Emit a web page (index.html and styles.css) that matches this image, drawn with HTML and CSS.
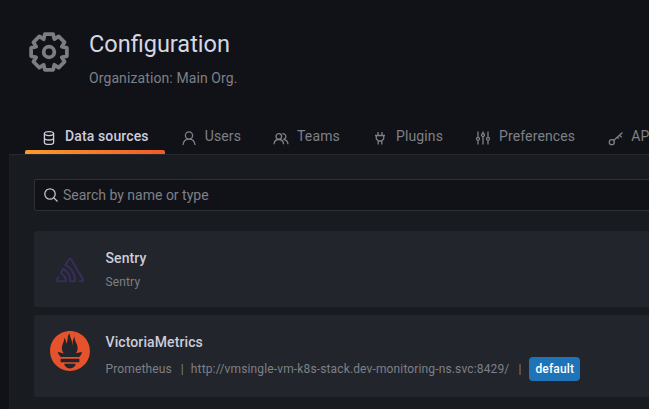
FILE: index.html
```html
<!DOCTYPE html>
<html lang="en">
<head>
<meta charset="utf-8">
<title>Configuration</title>
<link rel="stylesheet" href="styles.css">
</head>
<body>
<header class="page-header">
  <div class="title-row">
    <svg class="gear" viewBox="2 2 36 36"><polygon points="16.29,3.92 23.71,3.92 24.78,8.45 28.74,6.01 33.99,11.26 31.55,15.22 36.08,16.29 36.08,23.71 31.55,24.78 33.99,28.74 28.74,33.99 24.78,31.55 23.71,36.08 16.29,36.08 15.22,31.55 11.26,33.99 6.01,28.74 8.45,24.78 3.92,23.71 3.92,16.29 8.45,15.22 6.01,11.26 11.26,6.01 15.22,8.45"/><circle cx="20" cy="20" r="4.8"/></svg>
    <div class="title-text">
      <h1>Configuration</h1>
      <p>Organization: Main Org.</p>
    </div>
  </div>
  <nav class="tabs">
    <a class="tab active"><svg viewBox="0 0 16 16"><ellipse cx="8" cy="3.6" rx="4.6" ry="2"/><path d="M3.4 3.6v8.800c0 1.100 2 2 4.600 2s4.600-.9 4.600-2V3.600M3.400 8c0 1.100 2 2 4.600 2s4.600-.9 4.600-2"/></svg>Data sources</a>
    <a class="tab"><svg viewBox="0 0 16 16"><circle cx="8" cy="5.500" r="3.600"/><path d="M2 15c.3-3.600 2.800-5.900 6-5.900s5.700 2.300 6 5.900"/></svg>Users</a>
    <a class="tab"><svg viewBox="0 0 16 16"><circle cx="5.800" cy="6.500" r="2.800"/><path d="M1 14.300c.2-2.900 2.200-4.800 4.800-4.800s4.600 1.900 4.800 4.800M9.400 3.800a2.800 2.800 0 1 1 1 5.500c2.500.2 4.300 2.100 4.600 5"/></svg>Teams</a>
    <a class="tab"><svg viewBox="0 0 16 16"><path d="M6 2v3.500M10 2v3.500M3 5.500h10M4.300 5.500v3.200l2 2.300h3.400l2-2.300V5.500M6.200 11v3.500M9.800 11v3.500"/></svg>Plugins</a>
    <a class="tab"><svg viewBox="0 0 16 16"><path d="M3 1.500v5.700M3 10.500v4M8 1.500v1.800M8 6.800v7.700M13 1.500v5.700M13 10.500v4"/><circle cx="3" cy="8.800" r="1.500"/><circle cx="8" cy="5" r="1.500"/><circle cx="13" cy="8.800" r="1.500"/></svg>Preferences</a>
    <a class="tab"><svg viewBox="0 0 16 16"><circle cx="4.800" cy="12.200" r="2.500"/><path d="M6.600 10.400 15.500 2.500M12.500 5.200l2.300 2.200M10.300 7.100l1.500 1.500"/></svg>API keys</a>
  </nav>
</header>
<main class="content">
  <label class="search">
    <svg viewBox="0 0 16 16"><circle cx="7" cy="7" r="5.200"/><path d="m11 11 3.500 3.500"/></svg>
    <span>Search by name or type</span>
  </label>
  <ul class="cards">
    <li class="card">
      <div class="logo"><svg class="sentry" viewBox="0 0 50 44"><path d="M29,2.260a4.670,4.670,0,0,0-8,0L14.420,13.530A32.210,32.210,0,0,1,32.170,40.190H27.550A27.680,27.680,0,0,0,12.090,17.470L6,28a15.920,15.920,0,0,1,9.230,12.170H4.620A.76.76,0,0,1,4,39.060l2.940-5a10.740,10.740,0,0,0-3.360-1.900l-2.910,5a4.540,4.540,0,0,0,1.690,6.240A4.660,4.660,0,0,0,4.620,44H19.150a19.400,19.400,0,0,0-8-17.310l2.310-4A23.870,23.870,0,0,1,23.760,44H36.070a35.880,35.880,0,0,0-16.410-31.800l4.670-8a.77.77,0,0,1,1.050-.27c.53.29,20.290,34.770,20.660,35.170a.76.76,0,0,1-.68,1.130H40.600q.09,1.910,0,3.810h4.780A4.590,4.590,0,0,0,50,39.430a4.490,4.490,0,0,0-.62-2.280Z"/></svg></div>
      <div class="info">
        <h2>Sentry</h2>
        <div class="meta"><span>Sentry</span></div>
      </div>
    </li>
    <li class="card card-tall">
      <div class="logo"><svg class="prom" viewBox="0 0 256 257"><path d="M128.001.667C57.311.667 0 57.971 0 128.664c0 70.690 57.311 127.998 128.001 127.998S256 199.354 256 128.664C256 57.970 198.689.667 128 .667zm0 239.560c-20.112 0-36.419-13.435-36.419-30.004h72.838c0 16.566-16.307 30.004-36.419 30.004zm60.153-39.940H67.842V178.470h120.314v21.816h-.003zm-.432-33.045H68.185c-.398-.458-.804-.910-1.188-1.375-12.315-14.954-15.216-22.760-18.032-30.716-.048-.262 14.933 3.060 25.556 5.450 0 0 5.466 1.265 13.458 2.722-7.673-8.994-12.230-20.428-12.230-32.116 0-25.658 19.680-48.079 12.580-66.201 6.910.562 14.300 14.583 14.800 36.505 7.346-10.152 10.420-28.690 10.420-40.056 0-11.769 7.755-25.440 15.512-25.907-6.915 11.396 1.790 21.165 9.530 45.400 2.902 9.103 2.532 24.423 4.772 34.138.744-20.178 4.213-49.620 17.014-59.784-5.647 12.800.836 28.818 5.270 36.518 7.154 12.424 11.490 21.836 11.490 39.638 0 11.936-4.407 23.173-11.840 31.958 8.452-1.586 14.289-3.016 14.289-3.016l27.450-5.355c.002-.002-3.987 16.401-19.314 32.197z"/></svg></div>
      <div class="info">
        <h2>VictoriaMetrics</h2>
        <div class="meta"><span>Prometheus</span><span class="sep">|</span><span>http://vmsingle-vm-k8s-stack.dev-monitoring-ns.svc:8429/</span><span class="sep">|</span><span class="badge">default</span></div>
      </div>
    </li>
  </ul>
</main>
</body>
</html>
```

FILE: styles.css
```css
* { box-sizing: border-box; }
html, body { height: 100%; }
body {
  margin: 0;
  width: 649px;
  height: 409px;
  overflow: hidden;
  display: flex;
  flex-direction: column;
  background: #111217;
  color: #ccccdc;
  font-family: Roboto, "Liberation Sans", sans-serif;
  font-size: 14px;
}
.page-header { padding: 29px 0 0 25px; }
.title-row { display: flex; align-items: flex-start; height: 88px; }
.gear { width: 40px; height: 40px; margin: 3px 20px 0 4px; flex: none; fill: none; stroke: #7b7c84; stroke-width: 3.4; stroke-linejoin: round; }
.title-text h1 { margin: 0; font-size: 23.5px; font-weight: 400; line-height: 30px; color: #d5d7e2; }
.title-text p { margin: 10px 0 0; font-size: 14px; line-height: 18px; letter-spacing: .1px; color: #7e8087; }
.tabs { display: flex; height: 37px; white-space: nowrap; letter-spacing: .13px; }
.tab { position: relative; display: flex; align-items: center; height: 37px; padding: 2px 16px 1px; color: #7e8087; }
.tab svg { width: 16px; height: 16px; margin: 3px 8px 0 0; flex: none; fill: none; stroke: #7e8087; stroke-width: 1.300; }
.tab.active { color: #ccccdc; font-weight: 500; }
.tab.active svg { stroke: #ccccdc; }
.tab.active::after { content: ""; position: absolute; left: 0; right: 0; bottom: 0; height: 4px; border-radius: 2px 2px 0 0; background: linear-gradient(90deg, #f99c2d, #f05a28); }
.content { flex: 1; margin-left: 9px; width: 900px; padding: 24px 0 0 24px; background: #181b1f; border-top: 1px solid #25282c; border-left: 1px solid #1c1f23; }
.search { display: flex; align-items: center; height: 32px; padding-left: 8px; background: #111217; border: 1px solid #2d3036; border-radius: 2px; color: #7e8087; }
.search svg { width: 16px; height: 16px; margin-right: 4px; fill: none; stroke: #c0c1c9; stroke-width: 1.300; }
.cards { list-style: none; margin: 20px 0 0; padding: 0; display: flex; flex-direction: column; gap: 8px; }
.card { display: flex; height: 76px; padding: 16px; gap: 16px; background: #22252b; border-radius: 2px; }
.card-tall { height: 82px; }
.logo { width: 40px; height: 40px; display: flex; align-items: center; justify-content: center; flex: none; }
.sentry { width: 28px; height: 26px; margin-top: 6px; fill: #362d59; }
.prom { width: 40px; height: 40px; fill: #e6522c; }
.info { margin-left: -.5px; }
.info h2 { margin: 1px 0 0; font-size: 14px; font-weight: 500; line-height: 21px; letter-spacing: .1px; color: #ccccdc; }
.meta { display: flex; align-items: center; gap: 9px; height: 24px; margin-top: 1px; font-size: 12px; letter-spacing: .14px; color: #7e8087; white-space: nowrap; }
.card-tall .meta { margin-top: 4px; }
.sep { width: 1px; }
.badge { height: 24px; line-height: 24px; margin-left: 1px; padding: 0 6px; background: #1f73b7; color: #fff; font-weight: 500; border-radius: 4px; }
```
